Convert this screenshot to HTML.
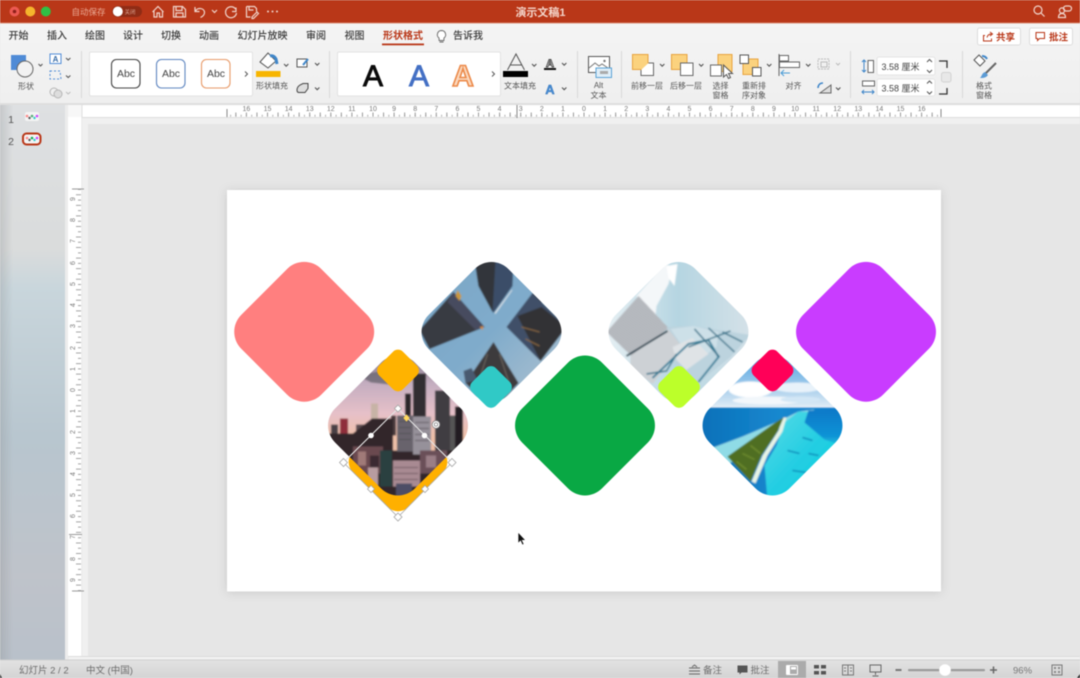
<!DOCTYPE html>
<html lang="zh-CN"><head><meta charset="utf-8"><title>演示文稿1</title>
<style>
html,body{margin:0;padding:0;width:1080px;height:678px;overflow:hidden;background:#e6e6e6}
svg{display:block;position:absolute;left:0;top:0;filter:blur(.45px)}
text{font-family:"Liberation Sans","Noto Sans CJK SC",sans-serif}
.t{font-size:10px;fill:#3a3a3a;text-anchor:middle;font-weight:500}
.l{font-size:8px;fill:#555;text-anchor:middle}
.r{font-size:7px;fill:#777;text-anchor:middle}
.s{font-size:9.5px;fill:#6c6c6c}
.c{fill:none;stroke:#555;stroke-width:1.1}
.i{fill:none;stroke:#555;stroke-width:1}
.w{fill:none;stroke:#f0d5cc;stroke-width:1.2}
</style></head><body>
<svg width="1080" height="678" viewBox="0 0 1080 678" xmlns="http://www.w3.org/2000/svg">
<defs>
<linearGradient id="panel" x1="0" y1="0" x2="0" y2="1">
<stop offset="0" stop-color="#dee0e2"/><stop offset=".26" stop-color="#dadcdc"/><stop offset=".33" stop-color="#c9d6dc"/><stop offset=".6" stop-color="#b8c6cf"/><stop offset=".85" stop-color="#bfc3ca"/><stop offset="1" stop-color="#b9c1ca"/></linearGradient>
<linearGradient id="pedge" x1="0" y1="0" x2="1" y2="0"><stop offset="0" stop-color="#8a8d90" stop-opacity=".3"/><stop offset=".2" stop-color="#8a8d90" stop-opacity="0"/></linearGradient>
<linearGradient id="stat" x1="0" y1="0" x2="0" y2="1"><stop offset="0" stop-color="#e2e2e2"/><stop offset="1" stop-color="#d4d4d4"/></linearGradient>
<linearGradient id="rib" x1="0" y1="0" x2="0" y2="1"><stop offset="0" stop-color="#f4f4f4"/><stop offset="1" stop-color="#efefef"/></linearGradient>
<linearGradient id="sky1" x1="0" y1="0" x2="1" y2="1"><stop offset="0" stop-color="#7ba6c6"/><stop offset=".5" stop-color="#7fabcb"/><stop offset="1" stop-color="#b4c4d0"/></linearGradient>
<linearGradient id="sky2" x1="0" y1="0" x2="0" y2="1"><stop offset="0" stop-color="#776e80"/><stop offset=".22" stop-color="#c4adc0"/><stop offset=".42" stop-color="#e6c0c8"/><stop offset=".58" stop-color="#efc0a8"/></linearGradient>
<linearGradient id="sky3" x1="0" y1="0" x2="1" y2="0"><stop offset="0" stop-color="#e8f0f4"/><stop offset=".5" stop-color="#b5d5e1"/><stop offset="1" stop-color="#d6e2e8"/></linearGradient>
<linearGradient id="sky4" x1="0" y1="0" x2="0" y2="1"><stop offset="0" stop-color="#3c9be0"/><stop offset=".6" stop-color="#9cc8ea"/><stop offset="1" stop-color="#dceaf5"/></linearGradient>
<linearGradient id="sea" x1="0" y1="0" x2="1" y2="0"><stop offset="0" stop-color="#0b6fb8"/><stop offset=".55" stop-color="#1588cf"/><stop offset="1" stop-color="#0d78c8"/></linearGradient>
<linearGradient id="lag" x1="0" y1="0" x2="1" y2="1"><stop offset="0" stop-color="#58dbe6"/><stop offset=".5" stop-color="#22cde2"/><stop offset="1" stop-color="#0cdadc"/></linearGradient>
<linearGradient id="deep" x1="0" y1="0" x2="0" y2="1"><stop offset="0" stop-color="#0a78c8"/><stop offset=".7" stop-color="#0f93d6"/><stop offset="1" stop-color="#0f93d6" stop-opacity="0"/></linearGradient>
<clipPath id="big"><rect x="-56.500" y="-56.500" width="113" height="113" rx="24" transform="rotate(45)"/></clipPath>
<filter id="soft" x="-5%" y="-5%" width="110%" height="110%"><feGaussianBlur stdDeviation=".7"/></filter>
<filter id="sh" x="-5%" y="-5%" width="110%" height="110%"><feDropShadow dx="0" dy="1" stdDeviation="5" flood-color="#000" flood-opacity=".13"/></filter>
<pattern id="stripe" width="3" height="2" patternUnits="userSpaceOnUse" patternTransform="rotate(35)"><rect width="3" height="2" fill="#c0c3c8"/><rect width="3" height=".7" fill="#a0a4aa"/></pattern>
</defs>

<!-- base -->
<rect width="1080" height="678" fill="#e6e6e6"/>
<!-- title bar -->
<rect width="1080" height="23" fill="#b93718"/>
<rect y="22.500" width="1080" height="1" fill="#d98a72"/>
<circle cx="14.500" cy="11.500" r="5" fill="#ec5a52"/><circle cx="14.500" cy="11.500" r="1.800" fill="#8e1f1a"/>
<circle cx="30.300" cy="11.500" r="5" fill="#f5b52d"/>
<circle cx="45.800" cy="11.500" r="5" fill="#2fc145"/>
<text x="88.500" y="15" font-size="8.500" fill="#eaa993" text-anchor="middle">自动保存</text>
<rect x="112" y="6" width="30" height="11" rx="5.500" fill="#8f2c15"/>
<circle cx="117.800" cy="11.500" r="5" fill="#fff"/>
<text x="130" y="14" font-size="5.500" fill="#dca593" text-anchor="middle">关闭</text>
<path class="w" d="M152.500 12L158 6.500l5.500 5.500M154 11v6h3v-4h2.500v4h3v-6"/>
<path class="w" d="M173.500 6.500h9l3 3v7.500h-12zM176 6.500v4h6v-4M176 17v-4h7v4"/>
<path class="w" d="M195 7v4.500h4.500M195.500 11c2-4 9-3 9 1.500 0 2.500-2 4-4 5"/>
<path class="w" d="M212 10l2.500 2.500 2.500-2.500"/>
<path class="w" d="M236 7.500v4h-4M235.500 9a5.500 5.500 0 1 0 1 4"/>
<path class="w" d="M246.500 6.500h8l2 2v3M246.500 6.500v10.500h4M249 6.500v3.500h4.500M252 17l5-5 1.500 1.500-5 5h-1.500z"/>
<circle cx="268" cy="11.500" r="1" fill="#f0d5cc"/><circle cx="272.500" cy="11.500" r="1" fill="#f0d5cc"/><circle cx="277" cy="11.500" r="1" fill="#f0d5cc"/>
<text x="540.500" y="16" font-size="11" fill="#f4d6cb" text-anchor="middle" font-weight="600">演示文稿1</text>
<circle cx="1038" cy="10" r="4" class="w"/><path class="w" d="M1041 13l3.500 3.500"/>
<circle cx="1062" cy="10.500" r="2.600" class="w"/><path class="w" d="M1058.500 17.500c0-3 1.500-4 3.500-4s3.500 1 3.500 4zM1066 6h3a1.500 1.500 0 0 1 0 5h-3a1.500 1.500 0 0 1 0-5z"/>

<!-- tabs and ribbon -->
<rect y="23.500" width="1080" height="81" fill="url(#rib)"/>
<rect y="103" width="1080" height="2" fill="#dedede"/>
<text class="t" x="18.500" y="39">开始</text><text class="t" x="57" y="39">插入</text><text class="t" x="95" y="39">绘图</text><text class="t" x="133" y="39">设计</text><text class="t" x="171" y="39">切换</text><text class="t" x="209" y="39">动画</text><text class="t" x="262.500" y="39">幻灯片放映</text><text class="t" x="316" y="39">审阅</text><text class="t" x="354.500" y="39">视图</text>
<text class="t" x="403" y="39" style="fill:#b93718;font-weight:700">形状格式</text>
<rect x="382" y="43.500" width="42" height="1.800" fill="#b93718"/>
<path d="M441.500 30.500a4.200 4.200 0 0 0-2.400 7.600v2.400h4.800v-2.400a4.200 4.200 0 0 0-2.400-7.600zM439.500 42h4" fill="#fff" stroke="#666" stroke-width=".9"/>
<text class="t" x="468" y="39">告诉我</text>
<rect x="977.500" y="28" width="43" height="17" rx="2" fill="#fff" stroke="#dcdcdc"/>
<path d="M985 35.500h-1.500v5.500h8v-2.500M987 37.500c.5-2.500 2-3.500 4.500-3.500M990 32l2.500 2-2.500 2" fill="none" stroke="#b93718"/>
<text x="1005.500" y="40.500" font-size="9.500" fill="#b93718" text-anchor="middle" font-weight="600">共享</text>
<rect x="1029.500" y="28" width="43" height="17" rx="2" fill="#fff" stroke="#dcdcdc"/>
<path d="M1036 32.500h8.500v6h-5l-2 2v-2h-1.500z" fill="none" stroke="#b93718"/>
<text x="1058.500" y="40.500" font-size="9.500" fill="#b93718" text-anchor="middle" font-weight="600">批注</text>

<!-- separators -->
<g fill="#d8d8d8"><rect x="81" y="51" width="1" height="47"/><rect x="329" y="51" width="1" height="47"/><rect x="577" y="51" width="1" height="47"/><rect x="621" y="51" width="1" height="47"/><rect x="850" y="51" width="1" height="47"/><rect x="962" y="51" width="1" height="47"/></g>

<!-- shape group -->
<rect x="11" y="55" width="15" height="15" fill="#4f8bd6"/>
<circle cx="25" cy="69" r="8" fill="#f2f2f2" stroke="#666" stroke-width="1"/>
<path class="c" d="M38.500 64l2 2 2-2"/>
<text class="l" x="26" y="89">形状</text>
<rect x="50" y="54" width="11" height="9.500" fill="#fff" stroke="#4f8bd6"/><text x="55.500" y="62" font-size="8" fill="#3a6ea8" text-anchor="middle" font-weight="700">A</text>
<path class="c" d="M66 58l2.200 2 2.200-2M66 75.500l2.200 2 2.200-2"/>
<path d="M50 71h10l1 8h-11z" fill="none" stroke="#4f8bd6" stroke-dasharray="2 2"/>
<circle cx="54" cy="92" r="4" fill="none" stroke="#b5b5b5"/><circle cx="58" cy="94" r="4" fill="#ddd" stroke="#b5b5b5"/>
<path d="M66 92l2.200 2 2.200-2" fill="none" stroke="#bbb"/>

<!-- gallery 1 -->
<rect x="89.500" y="52" width="163" height="44" rx="1.500" fill="#fff" stroke="#e2e2e2"/>
<rect x="111.500" y="59.500" width="28.500" height="28.500" rx="5" fill="#fff" stroke="#444" stroke-width="1.100"/>
<rect x="156.500" y="59.500" width="28.500" height="28.500" rx="5" fill="#fff" stroke="#5f86c0" stroke-width="1.100"/>
<rect x="201.500" y="59.500" width="28.500" height="28.500" rx="5" fill="#fff" stroke="#e89a68" stroke-width="1.100"/>
<text x="126" y="77" font-size="10.500" fill="#444" text-anchor="middle">Abc</text>
<text x="171" y="77" font-size="10.500" fill="#444" text-anchor="middle">Abc</text>
<text x="216" y="77" font-size="10.500" fill="#444" text-anchor="middle">Abc</text>
<path d="M245 71.500l2.500 2.500-2.500 2.500" fill="none" stroke="#555"/>

<!-- fill -->
<path d="M260 62l8-9 8 8-8 7z" fill="#fff" stroke="#555"/>
<path d="M270 56c3-1 5 1 6 3l1 5" fill="none" stroke="#3f86c9" stroke-width="3"/>
<rect x="256" y="71" width="24.500" height="6" fill="#f7b500"/>
<text class="l" x="272" y="88.500">形状填充</text>
<path class="c" d="M284 64l2.200 2.200 2.200-2.200M315 63l2.200 2.200 2.200-2.200M315 87.500l2.200 2.200 2.200-2.200"/>
<rect x="297" y="59" width="10" height="8" fill="#fff" stroke="#555"/><path d="M303 65l5-6" stroke="#3f86c9" stroke-width="2"/>
<path d="M297 90q0-3 3-5l3-1.500h5v5l-3 4h-6q-2 0-2-2.500z" fill="#ddd" stroke="#444"/>

<!-- gallery 2 -->
<rect x="337.500" y="52" width="163" height="44" rx="1.500" fill="#fff" stroke="#e2e2e2"/>
<text x="373" y="86" font-size="30" fill="#0b0b0b" stroke="#0b0b0b" stroke-width=".9" text-anchor="middle">A</text>
<text x="419" y="86" font-size="30" fill="#4470c4" stroke="#4470c4" stroke-width=".9" text-anchor="middle">A</text>
<text x="463" y="86" font-size="30" fill="#fbd9bf" stroke="#ec8a4a" stroke-width="1.600" text-anchor="middle" font-weight="700">A</text>
<path d="M492 71.500l2.500 2.500-2.500 2.500" fill="none" stroke="#555"/>

<!-- text fill -->
<path d="M507.500 70l8.500-16 8.500 16M510.500 65h11" fill="none" stroke="#555" stroke-width="1"/>
<rect x="503" y="71" width="25" height="6" fill="#000"/>
<text class="l" x="520" y="88.500">文本填充</text>
<path class="c" d="M532 64l2.200 2.200 2.200-2.200M562 63l2.200 2.200 2.200-2.200M562 87.500l2.200 2.200 2.200-2.200"/>
<text x="550" y="67" font-size="11" fill="#fff" stroke="#444" stroke-width=".9" text-anchor="middle" font-weight="700">A</text>
<rect x="544" y="68" width="12" height="2" fill="#111"/>
<text x="550" y="94" font-size="13" fill="#4a8fd6" stroke="#2f6fb5" stroke-width=".4" text-anchor="middle" font-weight="700">A</text>

<!-- alt text -->
<rect x="588.500" y="56.500" width="21" height="16" fill="#fff" stroke="#555"/>
<path d="M589 68l6-5 4 3 3-2 6 4" fill="none" stroke="#777"/><circle cx="604.500" cy="61" r="1.200" fill="#777"/>
<rect x="596" y="68" width="15.500" height="9.500" fill="#dfeef8" stroke="#5aa3d6"/><rect x="600" y="71" width="8" height="3" fill="#aaa"/>
<text class="l" x="598.500" y="88">Alt</text><text class="l" x="598.500" y="98">文本</text>

<!-- forward/back -->
<rect x="632.500" y="54.500" width="15.500" height="15" fill="#fbd27e" stroke="#e8a33e"/>
<path d="M648.500 63h5v12.500h-12.500v-5.500" fill="#fff" stroke="#666"/>
<text class="l" x="647" y="88.500">前移一层</text>
<path class="c" d="M660 64l2.200 2.200 2.200-2.200M699 64l2.200 2.200 2.200-2.200"/>
<rect x="671.500" y="54.500" width="15.500" height="15" fill="#fbd27e" stroke="#e8a33e"/>
<rect x="680.500" y="63" width="12.500" height="12.500" fill="#fff" stroke="#666"/>
<text class="l" x="686" y="88.500">后移一层</text>
<!-- selection pane -->
<rect x="718" y="54.500" width="14" height="17" fill="#fbd27e" stroke="#e8a33e"/>
<rect x="710.500" y="65" width="11" height="11" fill="#fff" stroke="#666"/>
<path d="M723.500 65l9 8.500h-4l2 4-2 1-2-4-3 2.500z" fill="#fff" stroke="#555"/>
<text class="l" x="720.500" y="88.500">选择</text><text class="l" x="720.500" y="98">窗格</text>
<!-- reorder -->
<rect x="743" y="59" width="15" height="15.500" fill="#fbd27e" stroke="#e8a33e"/>
<rect x="740" y="55" width="8.500" height="8.500" fill="#fff" stroke="#555"/>
<rect x="752.500" y="67.500" width="8.500" height="8.500" fill="#fff" stroke="#555"/>
<path class="c" d="M767 64l2.200 2.200 2.200-2.200M806 64l2.200 2.200 2.200-2.200"/>
<text class="l" x="754" y="88.500">重新排</text><text class="l" x="754" y="98">序对象</text>
<!-- align -->
<path d="M779 54v22" stroke="#666"/><rect x="779.500" y="55.500" width="9" height="5.500" fill="#fff" stroke="#666"/><rect x="779.500" y="62" width="20" height="5.500" fill="#fff" stroke="#666"/>
<path d="M781 73h9M784 70l-3 3 3 3" fill="none" stroke="#4a9bd6"/>
<text class="l" x="793.500" y="88.500">对齐</text>
<rect x="818" y="59" width="11" height="10" fill="none" stroke="#bbb" stroke-dasharray="2 1"/><rect x="821" y="62" width="6" height="5" fill="none" stroke="#bbb"/>
<path d="M836 63l2 2 2-2" fill="none" stroke="#bbb"/>
<path d="M820 93l11-8v8z" fill="#ddd" stroke="#666"/><path d="M818 88c0-3 2-5 5-5" fill="none" stroke="#3f86c9" stroke-width="1.500"/>
<path class="c" d="M836 87.500l2.200 2.200 2.200-2.200"/>

<!-- size -->
<path d="M864 60v12M862 62l2-2 2 2M862 70l2 2 2-2" fill="none" stroke="#3f86c9"/><rect x="868" y="60.500" width="5.500" height="12" fill="#fff" stroke="#666"/>
<rect x="862.500" y="81" width="12" height="5" fill="#fff" stroke="#666"/><path d="M862 92h12M864 90l-2 2 2 2M872 90l2 2-2 2" fill="none" stroke="#3f86c9"/>
<rect x="877" y="57" width="58" height="18" rx="2" fill="#fff" stroke="#e4e4e4"/>
<rect x="877" y="79" width="58" height="17" rx="2" fill="#fff" stroke="#e4e4e4"/>
<text x="881.500" y="70" font-size="9" fill="#444">3.58 厘米</text><text x="881.500" y="91.500" font-size="9" fill="#444">3.58 厘米</text>
<path d="M927 62l2.500-2.500 2.500 2.500M927 70l2.500 2.500 2.500-2.500M927 83.500l2.500-2.500 2.500 2.500M927 91.500l2.500 2.500 2.500-2.500" fill="none" stroke="#555"/>
<path d="M939 61h8v7M939 94h8v-6" fill="none" stroke="#333" stroke-width="1.300"/>
<rect x="941.500" y="72.500" width="9.500" height="9.500" rx="2" fill="#e8e8e8" stroke="#d2d2d2"/>
<!-- format pane -->
<path d="M974 60l5-5 6 6-5 5z" fill="#fff" stroke="#555"/><path d="M982 56c2 0 4 1 5 3" fill="none" stroke="#3f86c9" stroke-width="2"/>
<path d="M996 63l-11 11" stroke="#666" stroke-width="2"/><path d="M985 72l3 3c-2 3-5 3-8 3 2-2 2-5 5-6z" fill="#5b9bd5"/>
<text class="l" x="984" y="88.500">格式</text><text class="l" x="984" y="98">窗格</text>

<!-- left panel -->
<rect y="105" width="65" height="555" fill="url(#panel)"/>
<rect y="105" width="65" height="555" fill="url(#pedge)"/>
<rect x="65" y="105" width="3" height="555" fill="#ececec"/>
<text x="11" y="123" font-size="10.500" fill="#555" text-anchor="middle">1</text>
<text x="11" y="145" font-size="10.500" fill="#555" text-anchor="middle">2</text>
<rect x="25" y="112" width="14" height="9" rx="2" fill="#f4f4f4"/>
<circle cx="27" cy="116" r="1.300" fill="#f88"/><circle cx="29.500" cy="118" r="1.200" fill="#555"/><circle cx="32" cy="116" r="1.300" fill="#5a7"/><circle cx="34.500" cy="118" r="1.200" fill="#3cc"/><circle cx="37" cy="116" r="1.300" fill="#c4f"/>
<rect x="23" y="133.500" width="17.500" height="11" rx="3.500" fill="#f4f4f4" stroke="#b93718" stroke-width="2"/>
<circle cx="27" cy="138" r="1.300" fill="#f88"/><circle cx="29.500" cy="140" r="1.200" fill="#555"/><circle cx="32" cy="138" r="1.300" fill="#1a5"/><circle cx="34.500" cy="140" r="1.200" fill="#3cc"/><circle cx="37" cy="138" r="1.300" fill="#c4f"/>

<!-- rulers -->
<rect x="68" y="105" width="1012" height="12" fill="#f7f7f7"/>
<rect x="82" y="105.500" width="998" height="12" fill="#fff"/>
<rect x="68" y="117" width="1012" height="1" fill="#dedede"/>
<rect x="68" y="117" width="14" height="540" fill="#fff"/>
<rect x="81.500" y="105" width="1" height="552" fill="#dedede"/>
<rect x="82" y="118" width="998" height="6" fill="#f0f0f0"/>
<rect x="82" y="118" width="6" height="539" fill="#f0f0f0"/>
<rect x="68.500" y="656.500" width="1012" height="3" fill="#f2f2f2"/>
<rect x="68" y="656" width="1012" height="1" fill="#dcdcdc"/>
<!-- h ruler ticks -->
<path d="M230.100 115.700H941" stroke="#b0b0b0" stroke-width="2" stroke-dasharray="1 4.275" fill="none"/>
<path d="M235.350 114.500H941" stroke="#9a9a9a" stroke-width="4" stroke-dasharray="1 9.550" fill="none"/>
<path d="M227 109v8M941 109v8M517 105v13" stroke="#888"/>
<g>
<text class="r" x="246.400" y="111">16</text><text class="r" x="267.500" y="111">15</text><text class="r" x="288.600" y="111">14</text><text class="r" x="309.700" y="111">13</text><text class="r" x="330.800" y="111">12</text><text class="r" x="351.900" y="111">11</text><text class="r" x="373" y="111">10</text><text class="r" x="394.100" y="111">9</text><text class="r" x="415.200" y="111">8</text><text class="r" x="436.300" y="111">7</text><text class="r" x="457.400" y="111">6</text><text class="r" x="478.500" y="111">5</text><text class="r" x="499.600" y="111">4</text><text class="r" x="520.700" y="111">3</text><text class="r" x="541.800" y="111">2</text><text class="r" x="562.900" y="111">1</text><text class="r" x="584" y="111">0</text><text class="r" x="605.100" y="111">1</text><text class="r" x="626.200" y="111">2</text><text class="r" x="647.300" y="111">3</text><text class="r" x="668.400" y="111">4</text><text class="r" x="689.500" y="111">5</text><text class="r" x="710.600" y="111">6</text><text class="r" x="731.700" y="111">7</text><text class="r" x="752.800" y="111">8</text><text class="r" x="773.900" y="111">9</text><text class="r" x="795" y="111">10</text><text class="r" x="816.100" y="111">11</text><text class="r" x="837.200" y="111">12</text><text class="r" x="858.300" y="111">13</text><text class="r" x="879.400" y="111">14</text><text class="r" x="900.500" y="111">15</text><text class="r" x="921.600" y="111">16</text>
</g>
<!-- v ruler ticks -->
<path d="M79.500 189.050V591" stroke="#a4a4a4" stroke-width="3" stroke-dasharray="1 9.550" fill="none"/>
<path d="M78.500 194.300V591" stroke="#a4a4a4" stroke-width="5" stroke-dasharray="1 9.550" fill="none"/>
<path d="M72 189h12M69 534.500h13M72 591h12" stroke="#999"/>
<g>
<text class="r" transform="translate(75 199) rotate(-90)">9</text><text class="r" transform="translate(75 220) rotate(-90)">8</text><text class="r" transform="translate(75 241) rotate(-90)">7</text><text class="r" transform="translate(75 263) rotate(-90)">6</text><text class="r" transform="translate(75 284) rotate(-90)">5</text><text class="r" transform="translate(75 305) rotate(-90)">4</text><text class="r" transform="translate(75 326) rotate(-90)">3</text><text class="r" transform="translate(75 348) rotate(-90)">2</text><text class="r" transform="translate(75 369) rotate(-90)">1</text><text class="r" transform="translate(75 390) rotate(-90)">0</text><text class="r" transform="translate(75 411) rotate(-90)">1</text><text class="r" transform="translate(75 432) rotate(-90)">2</text><text class="r" transform="translate(75 453) rotate(-90)">3</text><text class="r" transform="translate(75 474) rotate(-90)">4</text><text class="r" transform="translate(75 495) rotate(-90)">5</text><text class="r" transform="translate(75 516) rotate(-90)">6</text><text class="r" transform="translate(75 537) rotate(-90)">7</text><text class="r" transform="translate(75 559) rotate(-90)">8</text><text class="r" transform="translate(75 580) rotate(-90)">9</text>
</g>

<!-- slide -->
<rect x="227" y="190" width="714" height="401.500" fill="#fff" filter="url(#sh)"/>
<!-- solid diamonds -->
<rect x="-56.500" y="-56.500" width="113" height="113" rx="24" transform="translate(304.200 331.800) rotate(45)" fill="#ff7f7f"/>
<rect x="-56.500" y="-56.500" width="113" height="113" rx="24" transform="translate(585 425.500) rotate(45)" fill="#09a844"/>
<rect x="-56.500" y="-56.500" width="113" height="113" rx="24" transform="translate(866 331.800) rotate(45)" fill="#c93cff"/>
<!-- orange selected behind city -->
<rect x="-39" y="-39" width="78" height="78" rx="14" transform="translate(398 462) rotate(45)" fill="#ffb000"/>

<!-- buildings photo -->
<g transform="translate(491.500 332)" clip-path="url(#big)"><g filter="url(#soft)">
<rect x="-75" y="-75" width="150" height="150" fill="url(#sky1)"/>
<path d="M-17-72H22L21-46 2-19-13-46z" fill="#3a4e68"/><path d="M-17-72H4L1-20-13-46z" fill="#33343a"/><path d="M20-42L3-19l1 1 17-24z" fill="#dfe4e8"/>
<path d="M-72-2L-38-40-7-5-62 17z" fill="#383a42"/><path d="M-38-40-7-5-16-2-44-30z" fill="#474c5e"/><path d="M-36-36l2-6 4 6-2 5z" fill="#c9973c"/><path d="M-12-5l4-1-1 4z" fill="#d28a3a"/>
<path d="M15-5L41-39 75-5 49 29z" fill="#3f5068"/><path d="M26-16L50-25 75-5 49 29z" fill="#333236"/><path d="M30-5l18 5M34 7l14 7" stroke="#8d6a42" stroke-width="1"/><path d="M41-39l8-8 10 14-9 3z" fill="#2d2d30"/>
<path d="M2 10L27 51 1 78-26 51-2 16z" fill="#3c3a3d"/><path d="M-26 51l-2-12 8-3 6 12z" fill="#4a5a70"/><path d="M-4 22l-9 28M8 22l10 30" stroke="#6e675f" stroke-width="1"/>
</g></g>
<rect x="-16.800" y="-16.800" width="33.600" height="33.600" rx="7" transform="translate(491 387) rotate(45)" fill="#30c9c6"/>

<!-- glass photo -->
<g transform="translate(678.500 332)" clip-path="url(#big)"><g filter="url(#soft)">
<rect x="-75" y="-75" width="150" height="150" fill="url(#sky3)"/>
<path d="M-42-36l16-18 10-14 10 2-4 18-12 22-2 20-5 4z" fill="#f4f7f9"/><path d="M-12-66l11-2-3 22-6-8z" fill="#fff"/>
<path d="M-40-36L-10-4-46 25-72 0z" fill="url(#stripe)"/>
<path d="M-48 24L-10-3 4 15-26 52-48 35z" fill="#cdd1d5"/>
<path d="M-12-5L14-6 72 3 52 25 18 52-6 30 4 15z" fill="#bcd3de"/>
<path d="M-8-3L15-6 40 0 38 15 18 30 3 13z" fill="#cde0e8"/>
<path d="M-6 15L14 6 30 22 8 38-2 28z" fill="#dfe3e6"/>
<path d="M-52 24l41-25" stroke="#1e3a48" stroke-width="1.800"/>
<path d="M-26 46L10 12 30 8 40 25 20 50" fill="none" stroke="#2a7a96" stroke-width="1.800"/>
<path d="M16-3l25 28M30-4l26 24M44 0l20 10M10 15l42-16M-32 42l20-3 10-17" stroke="#2f7088" stroke-width="1.400" fill="none"/>
</g></g>
<rect x="-16.800" y="-16.800" width="33.600" height="33.600" rx="7" transform="translate(679 387) rotate(45)" fill="#bcff2a"/>

<!-- city photo -->
<g transform="translate(398 425.500)" clip-path="url(#big)"><g filter="url(#soft)">
<rect x="-75" y="-75" width="150" height="150" fill="url(#sky2)"/>
<path d="M-40-50l25-5 18 8-12 6-18-2z" fill="#6a6672" opacity=".8"/>
<rect x="15" y="-52" width="13" height="43" fill="#302d33"/><rect x="7" y="-32" width="6" height="22" fill="#2a282c"/>
<rect x="37" y="-35" width="15" height="60" fill="#3f3d42"/><rect x="57" y="-19" width="8" height="44" fill="#211f22"/><rect x="52" y="-10" width="5" height="35" fill="#555"/>
<rect x="-27" y="-22" width="7" height="26" fill="#c7b3a6"/><rect x="-7" y="-10" width="5" height="20" fill="#4a3a3e"/>
<rect x="-58" y="-7" width="8" height="16" fill="#8f2f3a"/><rect x="-67" y="-1" width="7" height="10" fill="#4a3f44"/><rect x="-42" y="-1" width="10" height="14" fill="#5a4b4f"/>
<path d="M-75 8L-68 8-45 8-26 -7-5 -7-5 25 70 25V75H-75z" fill="#33262c"/>
<rect x="-1" y="-10" width="16" height="36" fill="#68646c"/><rect x="15" y="-9" width="18" height="38" fill="#96919a"/>
<path d="M1-4h12M1 2h12M1 8h12M1 14h12M17-3h14M17 3h14M17 9h14M17 15h14" stroke="#4f4b52" stroke-width=".8"/>
<rect x="-45" y="21" width="30" height="27" fill="#6a4a50"/><rect x="-40" y="26" width="8" height="14" fill="#a07a78"/><rect x="-28" y="30" width="9" height="12" fill="#3b2a30"/>
<rect x="-18" y="25" width="12" height="36" fill="#2b3f40"/>
<rect x="-5" y="35" width="27" height="26" fill="#a88a92"/>
<rect x="22" y="25" width="27" height="23" fill="#6b5058"/><rect x="28" y="30" width="10" height="12" fill="#9a7e86"/>
<rect x="-30" y="42" width="10" height="18" fill="#b89ca0"/>
<path d="M-4 42h24M-4 48h24M-4 54h24" stroke="#6f5a62" stroke-width="1"/>
<rect x="-2" y="58" width="16" height="14" fill="#4d4d66"/>
</g></g>
<rect x="-16.800" y="-16.800" width="33.600" height="33.600" rx="7" transform="translate(398 370.500) rotate(45)" fill="#ffb300"/>

<!-- island photo -->
<g transform="translate(772.500 425.500)" clip-path="url(#big)"><g filter="url(#soft)">
<rect x="-75" y="-75" width="150" height="56" fill="url(#sky4)"/>
<ellipse cx="-22" cy="-36" rx="22" ry="8" fill="#fff"/><ellipse cx="25" cy="-38" rx="24" ry="5" fill="#e8f2fa"/><ellipse cx="-5" cy="-25" rx="35" ry="4" fill="#f2f7fb"/><ellipse cx="28" cy="-26" rx="20" ry="3" fill="#d2e6f5"/>
<rect x="-75" y="-18" width="150" height="93" fill="url(#sea)"/>
<path d="M-70 26L-30 11 10-6 26-14 42-16 26-4 8 2-30 28-50 44z" fill="#8fdbe6"/>
<path d="M26-14L75-12V75H-5L-8 40 4 20 12-3z" fill="url(#lag)"/>
<path d="M36-15L75-16V22L52 14 32-3z" fill="url(#deep)"/>
<path d="M11-8L3-3-45 31-22 56-11 30 5 6z" fill="#4f6e22"/>
<path d="M-30 28l12 6M-22 20l10 8M-36 36l10 8" stroke="#6d8a2e" stroke-width="1.500"/>
<path d="M11-8L6 5-10 30-21 56-17 58-5 30 10 6 14-8z" fill="#e7f4e6"/>
<path d="M15 25l12 3M30 12l10 3M20 45l14 2M36 28l10 2" stroke="#1190bd" stroke-width="1.600"/>
</g></g>
<rect x="-16.800" y="-16.800" width="33.600" height="33.600" rx="7" transform="translate(772.500 370.500) rotate(45)" fill="#ff0058"/>

<!-- selection -->
<path d="M398 408.500L343.500 462.500 398 517 452 462.500z" fill="none" stroke="#a9a9a9" stroke-width=".8"/>
<path d="M398 408.500L343.500 462.500" stroke="#e8e8e8" stroke-width="1"/><path d="M398 408.500L452 462.500" stroke="#e8e8e8" stroke-width="1"/>
<g fill="#fff" stroke="#a4a4a4" stroke-width=".8">
<path d="M398 405l3.500 3.500-3.500 3.500-3.500-3.500z"/>
<path d="M343.500 458.500l4 4-4 4-4-4z"/><path d="M452 458.500l4 4-4 4-4-4z"/><path d="M398 513l4 4-4 4-4-4z"/>
<path d="M371 485.500l3.500 3.500-3.500 3.500-3.500-3.500z"/><path d="M425 485.500l3.500 3.500-3.500 3.500-3.500-3.500z"/>
</g>
<circle cx="371" cy="435.500" r="2.800" fill="#fff"/><circle cx="424.500" cy="435.500" r="2.800" fill="#fff"/>
<path d="M406.500 414.500l3 3.500-3 3.500-3-3.500z" fill="#ffd860" stroke="#e8c050" stroke-width=".5"/>
<circle cx="436" cy="424.500" r="3.800" fill="#fff" stroke="#888" stroke-width=".8"/><circle cx="436" cy="424.500" r="1.700" fill="none" stroke="#777" stroke-width=".7"/>

<!-- mouse cursor -->
<path d="M518 532v11.500l2.500-2.500 1.800 4 1.800-.8-1.800-3.800h3.500z" fill="#111" stroke="#fff" stroke-width=".7"/>

<!-- status bar -->
<rect y="660" width="1080" height="18" fill="url(#stat)"/>
<rect y="659.500" width="1080" height="1" fill="#cfcfcf"/>
<text class="s" x="19" y="673.500">幻灯片 2 / 2</text>
<text class="s" x="86" y="673.500">中文 (中国)</text>
<path d="M689 668h11M689 671h11M689 674h11M692 667l2.500-2 2.500 2" fill="none" stroke="#666"/>
<text class="s" x="703" y="673.500">备注</text>
<path d="M737.500 665.500h10v7h-6l-2 2v-2h-2z" fill="#555"/>
<text class="s" x="750.500" y="673.500">批注</text>
<rect x="778" y="661" width="28" height="17" fill="#ababab"/>
<rect x="786" y="665" width="12" height="10" rx="1" fill="#fff"/><rect x="790" y="666" width="7" height="8" fill="#ababab"/><rect x="791" y="667" width="5" height="2.500" fill="#fff"/>
<g fill="#555"><rect x="814" y="665" width="5" height="3.500"/><rect x="821" y="665" width="5" height="3.500"/><rect x="814" y="671" width="5" height="3.500"/><rect x="821" y="671" width="5" height="3.500"/></g>
<path d="M842.500 665h11v10h-11zM848 665v10M844 668h2M844 671h2M850 668h2M850 671h2" fill="none" stroke="#777"/>
<path d="M870 665h11v7h-11zM875.500 672v3M872.500 676h6" fill="none" stroke="#666"/>
<rect x="895.500" y="669" width="6" height="2" fill="#777"/>
<rect x="908" y="669" width="77" height="2.200" rx="1" fill="#9b9b9b"/>
<circle cx="945" cy="670" r="5.800" fill="#fff"/>
<path d="M990 670h7M993.500 666.500v7" stroke="#666" stroke-width="1.500"/>
<text x="1013" y="673.500" font-size="9.500" fill="#777">96%</text>
<path d="M1052 665h10v10h-10z" fill="none" stroke="#777"/><path d="M1054 667h2v2h-2zM1058 667h2v2h-2zM1054 671h2v2h-2zM1058 671h2v2h-2z" fill="#888"/>
<path d="M0 674l2 4H0zM1080 674l-3 4h3z" fill="#222"/>
</svg>
</body></html>
